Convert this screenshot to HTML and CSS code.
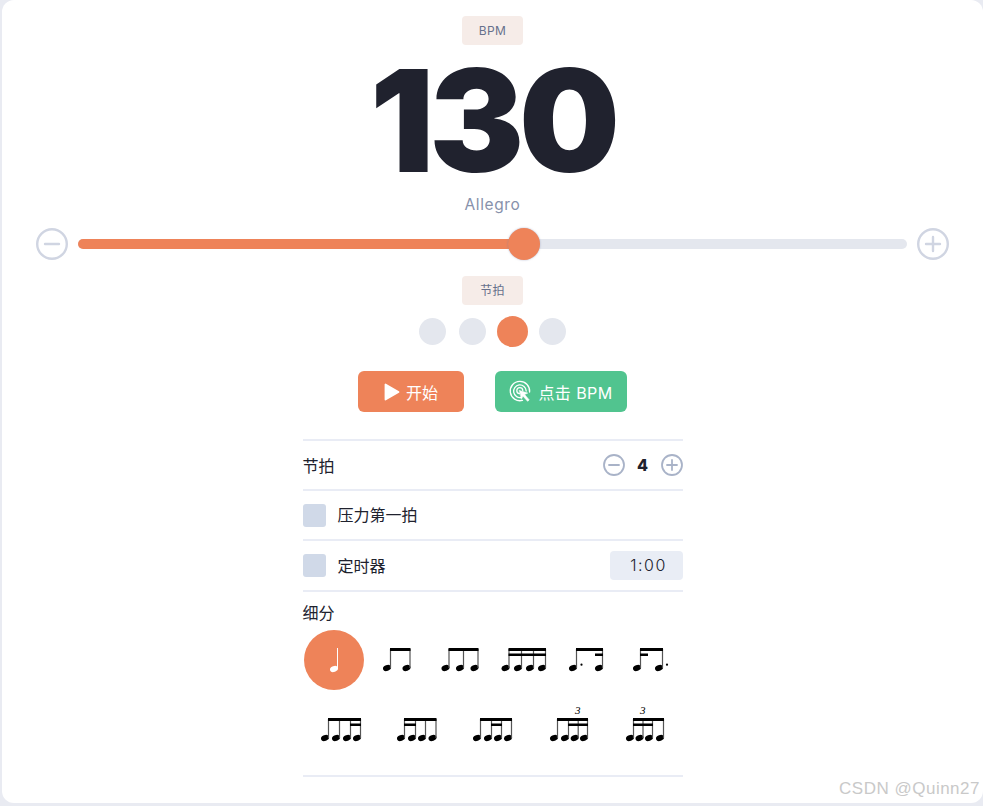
FILE: index.html
```html
<!DOCTYPE html>
<html lang="en">
<head>
    <meta charset="UTF-8">
    <meta name="viewport" content="width=device-width, initial-scale=1.0">
    <title>Metronome</title>
    <link rel="stylesheet" href="styles.css">
</head>
<body>
    <svg class="defs" width="0" height="0">
        <defs>
            <ellipse id="head" cx="0" cy="0" rx="4.1" ry="2.9" transform="rotate(-20)"/>
        </defs>
    </svg>
    <div class="card">
        <div class="pill">BPM</div>
        <div class="bpm-value">130</div>
        <div class="tempo-name">Allegro</div>

        <div class="slider-row">
            <svg class="round-btn" width="32" height="32" viewBox="0 0 32 32"><circle cx="16" cy="16" r="14.8"/><path d="M9 16h14"/></svg>
            <div class="track">
                <div class="track-fill" style="width: 53.8%"></div>
                <div class="thumb" style="left: 53.8%"></div>
            </div>
            <svg class="round-btn" width="32" height="32" viewBox="0 0 32 32"><circle cx="16" cy="16" r="14.8"/><path d="M9 16h14M16 9v14"/></svg>
        </div>

        <div class="pill pill-beat">节拍</div>
        <div class="dots">
            <span class="dot"></span>
            <span class="dot"></span>
            <span class="dot active"></span>
            <span class="dot"></span>
        </div>

        <div class="actions">
            <button class="btn btn-start">
                <svg width="16" height="18" viewBox="0 0 16 18"><path d="M1.500 1.500v15L14.500 9z" fill="#fff" stroke="#fff" stroke-width="1.800" stroke-linejoin="round"/></svg>
                开始
            </button>
            <button class="btn btn-tap">
                <svg width="23" height="23" viewBox="0 0 23 23" fill="none" stroke="#fff" stroke-width="1.3" stroke-linecap="round">
                    <path d="M13.5 20.4A9.7 9.7 0 1 1 20.6 12"/>
                    <path d="M12.6 17.3A6.3 6.3 0 1 1 17.2 11"/>
                    <path d="M10.5 13.6A3 3 0 1 1 13.8 10.4"/>
                    <path d="M10.5 10.5l8.2 2.6-3.1 1.4 4.6 5.4-1.6 1.4-4.7-5.3-1.4 3z" fill="#fff" stroke-width=".6" stroke-linejoin="round"/>
                </svg>
                <span class="tap-label">点击 BPM</span>
            </button>
        </div>

        <div class="settings">
            <div class="row">
                <span>节拍</span>
                <div class="stepper">
                    <svg class="step-btn" width="22" height="22" viewBox="0 0 22 22"><circle cx="11" cy="11" r="10"/><path d="M6 11h10"/></svg>
                    <b class="step-value">4</b>
                    <svg class="step-btn" width="22" height="22" viewBox="0 0 22 22"><circle cx="11" cy="11" r="10"/><path d="M6 11h10M11 6v10"/></svg>
                </div>
            </div>
            <div class="row">
                <label class="check"><span class="box"></span><span class="check-text">压力第一拍</span></label>
            </div>
            <div class="row row-timer">
                <label class="check"><span class="box"></span><span class="check-text">定时器</span></label>
                <div class="timer">1:00</div>
            </div>
            <div class="subdiv">
                <div class="subdiv-title">细分</div>
                <div class="note-row">
                    <div class="note selected">
                        <svg width="50" height="40" viewBox="0 0 50 40" fill="#fff">
                            <use href="#head" x="25" y="29"/>
                            <path d="M28.500 8v21" stroke="#fff" stroke-width="1"/>
                        </svg>
                    </div>
                    <div class="note">
                        <svg width="50" height="40" viewBox="0 0 50 40">
                            <use href="#head" x="15" y="28"/><use href="#head" x="34.500" y="28"/>
                            <path class="stem" d="M18.500 9v19M38 9v19"/>
                            <path d="M18 8h20.500v3H18z"/>
                        </svg>
                    </div>
                    <div class="note">
                        <svg width="50" height="40" viewBox="0 0 50 40">
                            <use href="#head" x="10.500" y="28"/><use href="#head" x="25" y="28"/><use href="#head" x="39.500" y="28"/>
                            <path class="stem" d="M14 9v19M28.500 9v19M43 9v19"/>
                            <path d="M13.500 8h30v3h-30z"/>
                        </svg>
                    </div>
                    <div class="note">
                        <svg width="50" height="40" viewBox="0 0 50 40">
                            <use href="#head" x="6.500" y="28"/><use href="#head" x="19" y="28"/><use href="#head" x="31" y="28"/><use href="#head" x="43" y="28"/>
                            <path class="stem" d="M10 9v19M22.500 9v19M34.500 9v19M46.500 9v19"/>
                            <path d="M9.500 8h37.500v3H9.500zM9.500 13.500h37.500v2.500H9.500z"/>
                        </svg>
                    </div>
                    <div class="note">
                        <svg width="50" height="40" viewBox="0 0 50 40">
                            <use href="#head" x="11" y="28"/><use href="#head" x="37" y="28"/>
                            <circle cx="19.500" cy="24.700" r="1.100"/>
                            <path class="stem" d="M14.500 9v19M40.500 9v19"/>
                            <path d="M14 8h27v3H14zM33 13.500h8v2.500h-8z"/>
                        </svg>
                    </div>
                    <div class="note">
                        <svg width="50" height="40" viewBox="0 0 50 40">
                            <use href="#head" x="11" y="28"/><use href="#head" x="33" y="28"/>
                            <circle cx="41" cy="24.700" r="1.100"/>
                            <path class="stem" d="M14.500 9v19M36.500 9v19"/>
                            <path d="M14 8h23v3H14zM14 13.500h8v2.500h-8z"/>
                        </svg>
                    </div>
                </div>
                <div class="note-row">
                    <div class="note">
                        <svg width="50" height="40" viewBox="0 0 50 40">
                            <use href="#head" x="9" y="28"/><use href="#head" x="20" y="28"/><use href="#head" x="31" y="28"/><use href="#head" x="41" y="28"/>
                            <path class="stem" d="M12.500 9v19M23.500 9v19M34.500 9v19M44.500 9v19"/>
                            <path d="M12 8h33v3H12zM34 13.500h11v2.500H34z"/>
                        </svg>
                    </div>
                    <div class="note">
                        <svg width="50" height="40" viewBox="0 0 50 40">
                            <use href="#head" x="9" y="28"/><use href="#head" x="20" y="28"/><use href="#head" x="30" y="28"/><use href="#head" x="40.500" y="28"/>
                            <path class="stem" d="M12.500 9v19M23.500 9v19M33.500 9v19M44 9v19"/>
                            <path d="M12 8h32.500v3H12zM12 13.500h12v2.500H12z"/>
                        </svg>
                    </div>
                    <div class="note">
                        <svg width="50" height="40" viewBox="0 0 50 40">
                            <use href="#head" x="9" y="28"/><use href="#head" x="20" y="28"/><use href="#head" x="30" y="28"/><use href="#head" x="40" y="28"/>
                            <path class="stem" d="M12.500 9v19M23.500 9v19M33.500 9v19M43.500 9v19"/>
                            <path d="M12 8h32v3H12zM23 13.500h11v2.500H23z"/>
                        </svg>
                    </div>
                    <div class="note">
                        <svg width="50" height="40" viewBox="0 0 50 40">
                            <text class="triplet" x="33.700" y="4">3</text>
                            <use href="#head" x="10" y="28"/><use href="#head" x="21" y="28"/><use href="#head" x="30.700" y="28"/><use href="#head" x="40" y="28"/>
                            <path class="stem" d="M13.500 9v19M24.500 9v19M34.200 9v19M43.500 9v19"/>
                            <path d="M13 8h31v3H13zM24 13.500h20v2.500H24z"/>
                        </svg>
                    </div>
                    <div class="note">
                        <svg width="50" height="40" viewBox="0 0 50 40">
                            <text class="triplet" x="22.700" y="4">3</text>
                            <use href="#head" x="10" y="28"/><use href="#head" x="19.500" y="28"/><use href="#head" x="29" y="28"/><use href="#head" x="40" y="28"/>
                            <path class="stem" d="M13.500 9v19M23 9v19M32.500 9v19M43.500 9v19"/>
                            <path d="M13 8h31v3H13zM13 13.500h20v2.500H13z"/>
                        </svg>
                    </div>
                </div>
            </div>
        </div>
    </div>
    <div class="watermark">CSDN @Quinn27</div>
</body>
</html>
```

FILE: styles.css
```css
html, body {
    margin: 0;
    height: 100%;
}
body {
    position: relative;
    overflow: hidden;
    background-color: #e9ebf2;
    font-family: Inter, "Noto Sans CJK SC", sans-serif;
    color: #20222e;
}
.defs {
    position: absolute;
}
.card {
    display: flex;
    flex-direction: column;
    align-items: center;
    box-sizing: border-box;
    height: 803px;
    margin-left: 2px;
    padding-top: 16px;
    background-color: #fff;
    border-radius: 12px;
}
.pill {
    width: 61px;
    height: 29px;
    line-height: 29px;
    text-align: center;
    font-size: 12px;
    letter-spacing: 0.3px;
    color: #67718c;
    background-color: #f6ece8;
    border-radius: 4px;
}
.bpm-value {
    height: 149px;
    line-height: 151px;
    font-size: 142px;
    font-weight: 900;
    letter-spacing: -5px;
    color: #20222e;
}
.tempo-name {
    height: 20px;
    line-height: 22px;
    font-size: 15.5px;
    letter-spacing: 0.6px;
    color: #8791ab;
}
.slider-row {
    display: flex;
    align-items: center;
    align-self: stretch;
    gap: 10px;
    margin: 14px 34px 0 34px;
    height: 32px;
}
.round-btn {
    flex: none;
    fill: none;
    stroke: #d0d5e2;
    stroke-width: 2.4;
    stroke-linecap: round;
}
.track {
    position: relative;
    flex: 1;
    height: 10px;
    background-color: #e4e7ee;
    border-radius: 5px;
}
.track-fill {
    height: 100%;
    background-color: #ee8359;
    border-radius: 5px;
}
.thumb {
    position: absolute;
    top: -11px;
    width: 32px;
    height: 32px;
    margin-left: -16px;
    background-color: #ee8359;
    border-radius: 50%;
    box-shadow: 0 0 2px rgba(120, 130, 170, 0.6);
}
.pill-beat {
    margin-top: 16px;
}
.dots {
    display: flex;
    align-items: center;
    gap: 13px;
    height: 31px;
    margin-top: 11px;
}
.dot {
    width: 27px;
    height: 27px;
    background-color: #e4e7ee;
    border-radius: 50%;
}
.dot.active {
    width: 31px;
    height: 31px;
    margin: 0 -2px;
    background-color: #ee8359;
}
.actions {
    display: flex;
    gap: 31px;
    margin-top: 24px;
}
.btn {
    display: flex;
    align-items: center;
    justify-content: center;
    gap: 6px;
    height: 41px;
    border: none;
    border-radius: 6px;
    padding: 0;
    font-family: inherit;
    font-size: 16px;
    color: #fff;
    cursor: pointer;
}
.btn-start {
    width: 106px;
    background-color: #ee8359;
}
.btn-tap {
    width: 132px;
    background-color: #51c48f;
}
.tap-label {
    letter-spacing: 0.4px;
}
.settings {
    width: 380px;
    margin-top: 27px;
    font-size: 16px;
    color: #20222e;
}
.row {
    display: flex;
    align-items: center;
    justify-content: space-between;
    box-sizing: border-box;
    height: 50px;
    border-top: 2px solid #e9ecf5;
}
.row-timer {
    height: 51px;
}
.stepper {
    display: flex;
    align-items: center;
}
.step-btn {
    fill: none;
    stroke: #a9b3c8;
    stroke-width: 1.8;
    stroke-linecap: round;
}
.step-value {
    width: 36px;
    text-align: center;
    font-size: 16px;
    font-weight: 800;
}
.check {
    display: flex;
    align-items: center;
    gap: 12px;
}
.check-text {
    margin-top: -2px;
}
.box {
    width: 23px;
    height: 23px;
    background-color: #d0d9e8;
    border-radius: 3px;
}
.timer {
    box-sizing: border-box;
    width: 73px;
    height: 29px;
    padding-left: 5px;
    line-height: 29px;
    text-align: center;
    font-size: 16px;
    font-weight: 300;
    letter-spacing: 1.5px;
    background-color: #e9edf5;
    border-radius: 4px;
}
.subdiv {
    box-sizing: border-box;
    height: 187px;
    padding-top: 11px;
    border-top: 2px solid #e9ecf5;
    border-bottom: 2px solid #e9ecf5;
}
.subdiv-title {
    height: 20px;
    line-height: 20px;
}
.note-row {
    display: flex;
    margin-top: 7px;
    margin-bottom: 10px;
}
.note-row + .note-row {
    margin-top: 0;
}
.note {
    flex: 1;
    display: flex;
    align-items: center;
    justify-content: center;
    height: 60px;
    fill: #000;
}
.note.selected {
    flex: none;
    width: 60px;
    margin: 0 1.500px 0 1px;
    background-color: #ee8359;
    border-radius: 50%;
}
.stem {
    fill: none;
    stroke: #555;
    stroke-width: 1.2;
}
.triplet {
    font-family: "Liberation Serif", serif;
    font-style: italic;
    font-size: 11px;
    text-anchor: middle;
}
.note svg {
    overflow: visible;
}
.watermark {
    position: absolute;
    right: 3px;
    bottom: 7px;
    font-family: "Liberation Sans", Arial, sans-serif;
    font-size: 17px;
    letter-spacing: 0.5px;
    color: #c9c9c9;
}
```
